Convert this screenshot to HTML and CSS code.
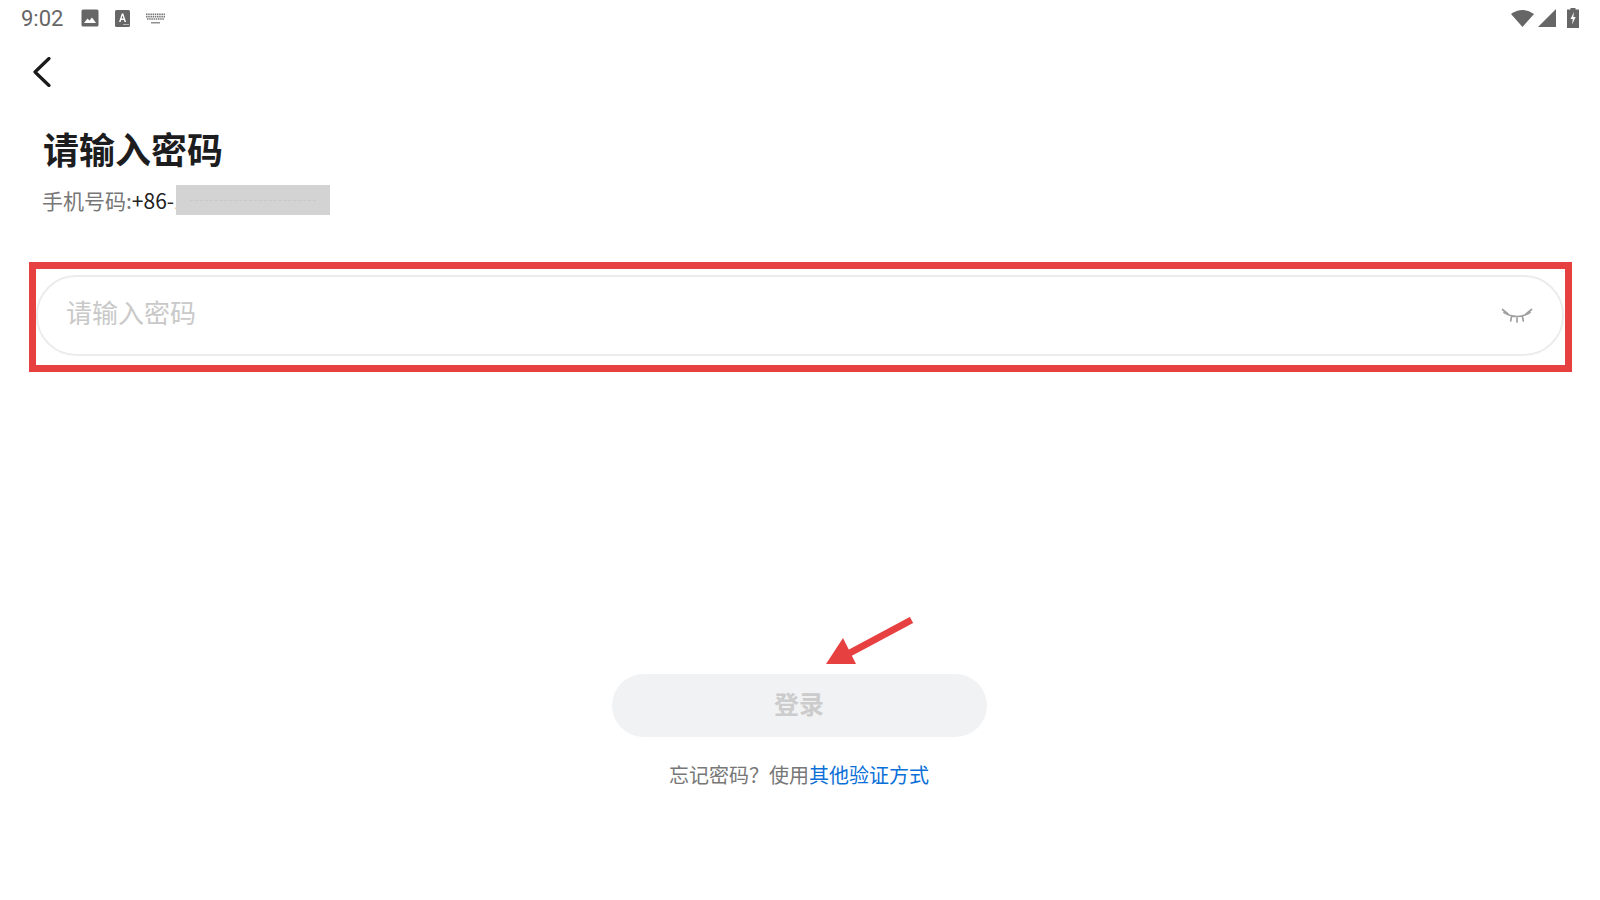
FILE: index.html
```html
<!DOCTYPE html>
<html lang="zh">
<head>
<meta charset="utf-8">
<title>请输入密码</title>
<link rel="stylesheet" href="styles.css">
</head>
<body>
<div class="screen">
  <div class="status">
    <div class="status-left">
      <span class="time">9:02</span>
      <svg class="ic-photo" width="18" height="18" viewBox="0 0 18 18"><rect x="0.5" y="0.5" width="17" height="17" rx="1.500" fill="#666"/><path d="M3 14l3.500-4.500 2 2 2.500-3 4 5.500z" fill="#fff"/></svg>
      <svg class="ic-a" width="15" height="17" viewBox="0 0 15 17"><rect width="15" height="17" rx="1.500" fill="#666"/><path d="M4 12L6.800 3.500h1.500l2.800 8.500H9.500L8.900 10H6.200l-.6 2zM6.600 8.600h1.900L7.550 5.500z" fill="#fff"/><path d="M8.500 14.500h1M10.500 14.500h1M12.500 14.500h1" stroke="#fff" stroke-width="1"/></svg>
      <svg class="ic-kb" width="19" height="11" viewBox="0 0 19 11"><path d="M0 1.200h19M0 3.600h19M1 6h17" stroke="#777" stroke-width="1.600" stroke-dasharray="1.500 .7" fill="none"/><path d="M5 9.800h9" stroke="#777" stroke-width="1.200"/></svg>
    </div>
    <div class="status-right">
      <svg class="ic-wifi" width="23" height="18" viewBox="0 0 23 18"><path d="M0 5Q11.500-3 23 5L11.500 18z" fill="#666"/></svg>
      <svg class="ic-signal" width="18" height="18" viewBox="0 0 18 18"><path d="M0 18L18 0v18z" fill="#666"/></svg>
      <svg class="ic-batt" width="12" height="20" viewBox="0 0 12 20"><path d="M3.500 0h5v1.500H12V20H0V1.500h3.500z" fill="#666"/><path d="M7 4L3.500 11h2.300L5 16.500 8.700 9H6.300z" fill="#fff"/></svg>
    </div>
  </div>
  <div class="nav">
    <svg width="20" height="30" viewBox="0 0 20 30"><path d="M16 1.500L2 15l14 13.500" fill="none" stroke="#1b1b1b" stroke-width="3.200" stroke-linecap="round" stroke-linejoin="round"/></svg>
  </div>
  <h1 class="title">请输入密码</h1>
  <p class="phone">手机号码:<span class="num">+86-1</span><span class="mask"><span class="mask-line"></span></span></p>
  <div class="field">
    <span class="placeholder">请输入密码</span>
    <svg class="eye" width="32" height="16" viewBox="0 0 32 16"><path d="M3 4.500Q16 12.500 29 4.500M1.500 1.500L7 6M30.500 1.500L25 6M10.500 9l-.8 4M16 10v4M21.500 9l.8 4" fill="none" stroke="#a0a0a0" stroke-width="1.700" stroke-linecap="round"/></svg>
  </div>
  <div class="actions">
    <button class="login" type="button">登录</button>
    <p class="alt">忘记密码？使用<a class="link">其他验证方式</a></p>
  </div>
  <div class="mark-box"></div>
  <svg class="mark-arrow" width="90" height="50" viewBox="0 0 90 50"><path d="M85.500 3L20 38" stroke="#e64040" stroke-width="7" fill="none"/><path d="M0 47L17 21 30 47z" fill="#e64040"/></svg>
</div>
</body>
</html>
```

FILE: styles.css
```css
* { box-sizing: border-box; }
html, body { margin: 0; padding: 0; background: #fff; }
.screen {
  position: relative;
  width: 1600px;
  height: 900px;
  overflow: hidden;
  font-family: "Noto Sans CJK SC", "Noto Sans", sans-serif;
  display: flex;
  flex-direction: column;
}
.status {
  height: 36px;
  padding: 0 21px 0 21px;
  display: flex;
  align-items: center;
  justify-content: space-between;
  flex: none;
}
.status-left, .status-right { display: flex; align-items: center; }
.time {
  font-family: Roboto, sans-serif;
  font-size: 22px;
  color: #666;
  width: 60px;
}
.ic-a { margin-left: 16px; }
.ic-kb { margin-left: 16px; }
.ic-signal { margin-left: 4px; }
.ic-batt { margin-left: 11px; }
.nav {
  height: 55px;
  padding: 21px 0 0 33px;
  flex: none;
}
.title {
  margin: 34px 0 0 43px;
  font-size: 36px;
  line-height: 46px;
  font-weight: 700;
  color: #1d1d1f;
}
.phone {
  margin: 14px 0 0 42px;
  height: 30px;
  display: flex;
  align-items: center;
  font-size: 21px;
  color: #777;
}
.num {
  color: #222;
  width: 44px;
  white-space: nowrap;
}
.mask {
  position: relative;
  width: 154px;
  height: 30px;
  background: #d3d3d3;
  display: flex;
  align-items: center;
  padding: 0 14px;
}
.mask-line {
  width: 100%;
  border-top: 1px dashed #c8c8c8;
}
.field {
  margin: 60px 36px 0;
  height: 81px;
  border: 2px solid #ececec;
  border-radius: 40px;
  display: flex;
  align-items: center;
  justify-content: space-between;
  padding: 0 29px 0 28px;
}
.placeholder {
  font-size: 26px;
  color: #c9c9c9;
  position: relative;
  top: -4px;
}
.eye { flex: none; }
.actions {
  margin-top: 318px;
  display: flex;
  flex-direction: column;
  align-items: center;
  padding-right: 2px;
}
.login {
  width: 375px;
  height: 63px;
  border: 0;
  border-radius: 32px;
  background: #f1f2f4;
  color: #cccccc;
  font-family: inherit;
  font-size: 25px;
  font-weight: 700;
  padding: 0 0 6px;
}
.alt {
  margin: 23px 0 0;
  font-size: 20px;
  line-height: 30px;
  color: #777;
}
.link { color: #0a6fd8; }
.mark-box {
  position: absolute;
  left: 29px;
  top: 262px;
  width: 1543px;
  height: 110px;
  border: 7px solid #e64040;
}
.mark-arrow {
  position: absolute;
  left: 826px;
  top: 617px;
}
```
